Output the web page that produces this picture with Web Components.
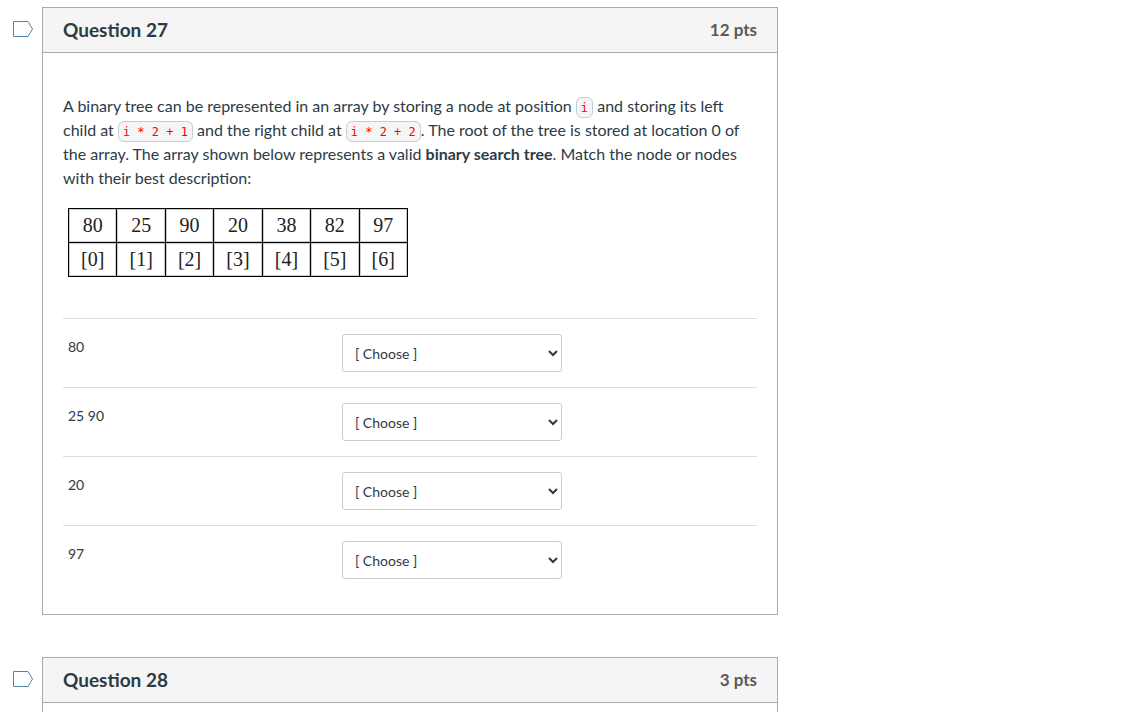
<!DOCTYPE html>
<html lang="en">
<head>
<meta charset="utf-8">
<title>Quiz</title>
<style>
  body { margin: 0; background: #fff; color: #2d3b45; font: 16px/24px Lato, "Liberation Sans", sans-serif; }
</style>
</head>
<body>
<quiz-page>
  <quiz-question name="Question 27" points="12 pts">
    <question-text>A binary tree can be represented in an array by storing a node at position <inline-code>i</inline-code> and storing its left child at <inline-code>i * 2 + 1</inline-code> and the right child at <inline-code>i * 2 + 2</inline-code>. The root of the tree is stored at location 0 of the array. The array shown below represents a valid <b>binary search tree</b>. Match the node or nodes with their best description:</question-text>
    <array-figure values="80 25 90 20 38 82 97"></array-figure>
    <match-list>
      <match-row label="80"></match-row>
      <match-row label="25 90"></match-row>
      <match-row label="20"></match-row>
      <match-row label="97"></match-row>
    </match-list>
  </quiz-question>
  <quiz-question name="Question 28" points="3 pts" open></quiz-question>
</quiz-page>

<script>
class Base extends HTMLElement {
  connectedCallback() {
    if (!this.shadowRoot) this.attachShadow({ mode: "open" }).innerHTML = this.render();
  }
}

customElements.define("quiz-page", class extends Base {
  render() {
    return `<style>
      :host { display: block; }
      /* the right margin is the space of the quiz navigation column */
      main { box-sizing: border-box; min-height: 100vh; margin-right: 358px; padding-top: 7px;
        display: flex; flex-direction: column; gap: 42px; }
    </style><main><slot></slot></main>`;
  }
});

customElements.define("quiz-question", class extends Base {
  render() {
    return `<style>
      :host { display: grid; grid-template-columns: 42px minmax(0, 1fr); }
      :host([open]) { flex: 1; }
      :host([open]) section { border-bottom: 0; }
      :host([open]) .body { padding: 0; }
      .flag { all: unset; cursor: pointer; justify-self: start; align-self: start; margin: 13px 0 0 12px; }
      svg { display: block; width: 22px; height: 18px; }
      section { border: 1px solid #aaa; background: #fff; }
      header { display: flex; align-items: center; justify-content: space-between; height: 44px;
        padding: 0 20px; background: #f5f5f5; border-bottom: 1px solid #aaa; }
      h2 { margin: 0; font-size: 19px; line-height: 24px; font-weight: 700; }
      .points { color: #595959; font-size: 17px; line-height: 24px; font-weight: 700; }
      .body { padding: 41px 20px 20px; }
    </style>
    <button class="flag" type="button" aria-label="Flag ${this.getAttribute("name")}">
      <svg viewBox="0 0 22 18" fill="none" stroke="#4a86ab" aria-hidden="true"><path d="M1.5 1.5H16L20.5 9L16 16.5H1.5Z"/></svg>
    </button>
    <section>
      <header><h2>${this.getAttribute("name")}</h2><span class="points">${this.getAttribute("points")}</span></header>
      <div class="body"><slot></slot></div>
    </section>`;
  }
});

customElements.define("question-text", class extends Base {
  render() {
    return `<style>:host { display: block; } p { margin: 0; }</style><p><slot></slot></p>`;
  }
});

customElements.define("inline-code", class extends Base {
  render() {
    return `<style>
      :host { display: inline; }
      code { padding: 3px 4px 2px; border: 1px solid #c7cdd1; border-radius: 6px; background: #f5f5f5;
        color: #f00; font: 12px "DejaVu Sans Mono", monospace; white-space: nowrap; }
    </style><code><slot></slot></code>`;
  }
});

customElements.define("array-figure", class extends Base {
  render() {
    const values = this.getAttribute("values").split(" ");
    return `<style>
      :host { display: flow-root; height: 68px; margin: 18px 5px 42px; }
      table { width: 340px; table-layout: fixed; border-collapse: collapse; color: #222;
        font: 20px/24px "Liberation Serif", serif; }
      td { box-sizing: border-box; height: 34px; padding: 0 0 2px; border: 1px solid #000;
        box-shadow: inset 0 0 0 1px rgba(0, 0, 0, .2); text-align: center; }
    </style>
    <table><tbody>
      <tr>${values.map(v => `<td>${v}</td>`).join("")}</tr>
      <tr>${values.map((v, i) => `<td>[${i}]</td>`).join("")}</tr>
    </tbody></table>`;
  }
});

customElements.define("match-list", class extends Base {
  render() {
    return `<style>:host { display: block; }</style><slot></slot>`;
  }
});

customElements.define("match-row", class extends Base {
  render() {
    return `<style>
      :host { display: grid; grid-template-columns: 2fr 3fr; align-items: start;
        padding: 15px 4px 15px 5px; border-top: 1px solid #ddd; }
      label { font-size: 14px; line-height: 26px; }
      select { box-sizing: border-box; width: 220px; max-width: 100%; height: 38px; margin: 0; padding: 8px;
        border: 1px solid #c7cdd1; border-radius: 3px; background: #fff; color: #2d3b45;
        font: 14px/20px Lato, "Liberation Sans", sans-serif; }
    </style>
    <label for="answer">${this.getAttribute("label")}</label>
    <select id="answer"><option>[ Choose ]</option></select>`;
  }
});
</script>
</body>
</html>
